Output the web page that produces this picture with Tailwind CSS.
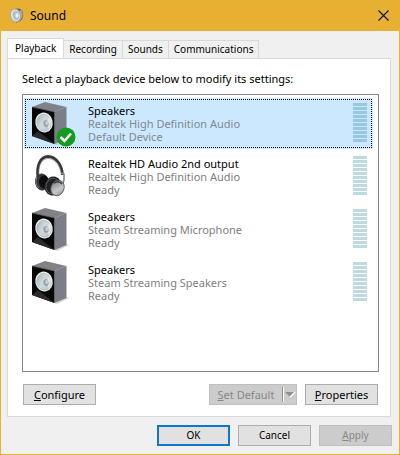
<!DOCTYPE html>
<html lang="en">
<head>
<meta charset="utf-8">
<meta name="viewport" content="width=device-width, initial-scale=1">
<title>Sound</title>
<script src="https://cdn.jsdelivr.net/npm/@tailwindcss/browser@4"></script>
</head>
<body class="flex min-h-screen flex-col bg-[#e7b033] px-px pb-px font-['Noto_Sans','Open_Sans',sans-serif] text-[11px] leading-[13px] text-black">
<svg class="absolute size-0" aria-hidden="true">
  <defs>
    <linearGradient id="cone" x1="0" y1="0" x2="1" y2="1"><stop offset="0" stop-color="#a3b0b6"/><stop offset=".45" stop-color="#cfd9dc"/><stop offset="1" stop-color="#b6c3c8"/></linearGradient>
    <linearGradient id="cup" x1="0" y1="0" x2="1" y2="1"><stop offset="0" stop-color="#707274"/><stop offset=".6" stop-color="#c6c8c9"/><stop offset="1" stop-color="#85888a"/></linearGradient>
    <symbol id="speaker" viewBox="0 0 40 46">
      <path d="M24 43 36 37 39 38 27 44Z" fill="#bbb" opacity=".6"/>
      <path d="M2 6 15 1 36.500 6 24.500 11Z" fill="#808288"/>
      <path d="M24.500 11 36.500 6V38L24.500 43Z" fill="#7b7e86"/>
      <path d="M2 6 24.500 11V43L2 35Z" fill="#080808"/>
      <path d="M2 6 24.500 11" fill="none" stroke="#4d4e52" stroke-width=".7"/>
      <path d="M2 35 8 30 24.500 43Z" fill="#2b2b2d"/>
      <ellipse cx="14" cy="21.500" rx="8.700" ry="10" transform="rotate(-12 14 21.500)" fill="#f1f4f5"/>
      <ellipse cx="14" cy="21.700" rx="7.200" ry="8.500" transform="rotate(-12 14 21.700)" fill="url(#cone)" stroke="#a4b0b5" stroke-width=".6"/>
      <path d="M15 22 20 15.500Q23 22 19 28.500Z" fill="#eef1f2" opacity=".65"/>
      <ellipse cx="16" cy="22.500" rx="2.500" ry="3.400" transform="rotate(-12 16 22.500)" fill="#8f9ea5"/>
      <ellipse cx="16.700" cy="22" rx="1.600" ry="2.300" fill="#c5ced2"/>
    </symbol>
    <symbol id="headphones" viewBox="0 0 40 46">
      <path d="M8 24C6 11 11 2.500 18 2.500 26 2.500 32 11 32.500 21" fill="none" stroke="#36373a" stroke-width="2.800"/>
      <path d="M9 21C8 11 12 4.500 18 4.500 24 4.500 29 10 31 18" fill="none" stroke="#818386" stroke-width=".7"/>
      <path d="M31 19 34 20 34 26 32 32" fill="none" stroke="#85878a" stroke-width="1.600"/>
      <ellipse cx="12" cy="28" rx="7" ry="8.500" transform="rotate(-12 12 28)" fill="#39393c"/>
      <ellipse cx="14" cy="28" rx="5" ry="6.500" fill="#0d0d0e"/>
      <path d="M7 23Q4 29 9 34" fill="none" stroke="#77797c"/>
      <ellipse cx="23" cy="32" rx="8.500" ry="9.500" transform="rotate(15 23 32)" fill="#202123"/>
      <ellipse cx="22.500" cy="32" rx="6.500" ry="7.800" transform="rotate(15 22.500 32)" fill="none" stroke="#55575a"/>
      <ellipse cx="27.500" cy="34" rx="6.500" ry="8" transform="rotate(22 27.500 34)" fill="url(#cup)" stroke="#4d4f51" stroke-width=".8"/>
      <path d="M24 29Q29 26 32 30" fill="none" stroke="#3d3f41" stroke-width="1.500"/>
    </symbol>
    <symbol id="meter" viewBox="0 0 14 39"><path d="M0 0H14V3H0ZM0 4H14V7H0ZM0 8H14V11H0ZM0 12H14V15H0ZM0 16H14V19H0ZM0 20H14V23H0ZM0 24H14V27H0ZM0 28H14V31H0ZM0 32H14V35H0ZM0 36H14V39H0Z" fill="currentColor"/></symbol>
  </defs>
</svg>

<header class="flex h-[31px] shrink-0 items-center pr-2 pl-[9px]">
  <svg class="h-4 w-[14px]" viewBox="0 0 14 16" aria-hidden="true">
    <path d="M5 1Q11-1 13 5 14 10 10 13L6 15Z" fill="#555b5d"/>
    <path d="M9 3Q12 7 9 13L12 10Q14 6 11 2Z" fill="#a3a9a9"/>
    <ellipse cx="5.500" cy="7.500" rx="5" ry="6.500" transform="rotate(-14 5.500 7.500)" fill="#e5e8e7" stroke="#a3aaa9"/>
    <ellipse cx="6" cy="7.500" rx="3.500" ry="5" transform="rotate(-14 6 7.500)" fill="#b5bfc4"/>
    <ellipse cx="7" cy="7.500" rx="1.500" ry="2.300" fill="#eff2f2"/>
  </svg>
  <h1 class="ml-[6px] text-xs">Sound</h1>
  <button type="button" aria-label="Close" class="ml-auto flex size-4 items-center justify-center">
    <svg class="size-[11px]" viewBox="0 0 11 11" aria-hidden="true"><path d="M.5.500 10.500 10.500M10.500.500.500 10.500" stroke="#111" stroke-width="1.100" fill="none"/></svg>
  </button>
</header>

<main class="flex flex-1 flex-col bg-[#f0f0f0] px-[6px] pt-[7px] pb-2">
  <div role="tablist" class="flex items-end text-[10px]">
    <button type="button" role="tab" aria-selected="true" class="-mb-px h-[21px] border border-b-0 border-[#d9d9d9] bg-white px-[7px] pb-[2px]">Playback</button>
    <button type="button" role="tab" class="h-[18px] border-t border-r border-[#d9d9d9] px-[5px]">Recording</button>
    <button type="button" role="tab" class="h-[18px] border-t border-r border-[#d9d9d9] px-[5px]">Sounds</button>
    <button type="button" role="tab" class="h-[18px] border-t border-r border-[#d9d9d9] px-[5px]">Communications</button>
  </div>
  <section role="tabpanel" class="mr-[2px] flex flex-1 flex-col border border-[#d9d9d9] bg-white pt-[13px] pr-[11px] pb-[11px] pl-[14px]">
    <p id="prompt">Select a playback device below to modify its settings:</p>
    <ul role="listbox" aria-labelledby="prompt" class="mt-[9px] flex-1 border border-[#828790] py-1 pr-[6px] pl-[2px]">
      <li role="option" aria-selected="true" class="mb-1 flex h-[49px] items-start border border-dotted border-black bg-[#cce8ff] pt-1 pr-1 pl-1 outline outline-[#cce8ff]">
        <div class="relative -mt-[3px]">
          <svg class="h-[46px] w-10"><use href="#speaker"/></svg>
          <svg class="absolute top-[26px] left-[26px] size-5" viewBox="0 0 20 20" role="img" aria-label="Default"><circle cx="10" cy="10" r="9.500" fill="#169b22"/><path d="M4.500 10 8.500 14 15 6.500" fill="none" stroke="#fff" stroke-width="2.500"/></svg>
        </div>
        <div class="ml-[18px] text-[#808890]"><p class="text-black">Speakers</p><p>Realtek High Definition Audio</p><p>Default Device</p></div>
        <svg class="-mt-px ml-auto h-[39px] w-[14px] text-[#97c7e2]" role="img" aria-label="Level"><use href="#meter"/></svg>
      </li>
      <li role="option" class="flex h-[53px] items-start pt-[5px] pr-[5px] pl-[5px]">
        <svg class="-mt-[3px] h-[46px] w-10"><use href="#headphones"/></svg>
        <div class="ml-[18px] text-[#808080]"><p class="text-black">Realtek HD Audio 2nd output</p><p>Realtek High Definition Audio</p><p>Ready</p></div>
        <svg class="-mt-px ml-auto h-[39px] w-[14px] text-[#bfd9e0]" role="img" aria-label="Level"><use href="#meter"/></svg>
      </li>
      <li role="option" class="flex h-[53px] items-start pt-[5px] pr-[5px] pl-[5px]">
        <svg class="-mt-[3px] h-[46px] w-10"><use href="#speaker"/></svg>
        <div class="ml-[18px] text-[#808080]"><p class="text-black">Speakers</p><p>Steam Streaming Microphone</p><p>Ready</p></div>
        <svg class="-mt-px ml-auto h-[39px] w-[14px] text-[#bfd9e0]" role="img" aria-label="Level"><use href="#meter"/></svg>
      </li>
      <li role="option" class="flex h-[53px] items-start pt-[5px] pr-[5px] pl-[5px]">
        <svg class="-mt-[3px] h-[46px] w-10"><use href="#speaker"/></svg>
        <div class="ml-[18px] text-[#808080]"><p class="text-black">Speakers</p><p>Steam Streaming Speakers</p><p>Ready</p></div>
        <svg class="-mt-px ml-auto h-[39px] w-[14px] text-[#bfd9e0]" role="img" aria-label="Level"><use href="#meter"/></svg>
      </li>
    </ul>
    <div class="mt-3 flex px-px">
      <button type="button" class="h-[21px] w-[73px] border border-[#adadad] bg-[#e1e1e1]"><u>C</u>onfigure</button>
      <button type="button" disabled class="ml-auto flex h-[21px] w-[88px] items-center border border-[#bfbfbf] bg-[#cccccc] text-[#888]">
        <span class="flex-1 text-center"><u>S</u>et Default</span>
        <svg class="h-[15px] w-[14px]" viewBox="0 0 14 15" aria-hidden="true"><path d="M.5 0V15" stroke="#909090"/><path d="M1.500 0V15" stroke="#fff"/><path d="M8 10 13 5" stroke="#fff" stroke-width="1.500"/><path d="M3 5H12L7.500 9.500Z" fill="#909090"/></svg>
      </button>
      <button type="button" class="ml-2 h-[21px] w-[73px] border border-[#adadad] bg-[#e1e1e1]"><u>P</u>roperties</button>
    </div>
  </section>
  <footer class="mt-2 flex justify-end gap-2 pr-px text-[10px]">
    <button type="button" class="h-[21px] w-[73px] border-2 border-[#0f76c9] bg-[#e1e1e1]">OK</button>
    <button type="button" class="h-[21px] w-[73px] border border-[#adadad] bg-[#e1e1e1]">Cancel</button>
    <button type="button" disabled class="h-[21px] w-[73px] border border-[#bfbfbf] bg-[#cccccc] text-[#888]"><u>A</u>pply</button>
  </footer>
</main>
</body>
</html>
